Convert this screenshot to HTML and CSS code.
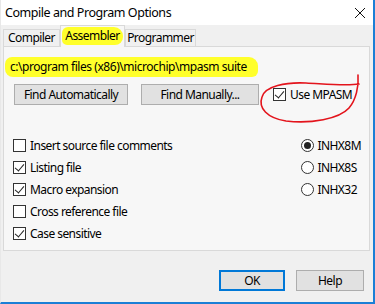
FILE: index.html
```
<!DOCTYPE html>
<html lang="en">
<head>
  <meta charset="UTF-8" />
  <title>Compile and Program Options</title>
  <link rel="stylesheet" href="styles.css">
</head>
<body>
  <div class="window">
    <div class="titlebar">
      <span class="title">Compile and Program Options</span>
      <svg class="close" width="12" height="12" viewBox="0 0 12 12"><path d="M1 1 L11 11 M11 1 L1 11" stroke="#111" stroke-width="1" fill="none"/></svg>
    </div>

    <div class="tabs">
      <div class="tab tab-compiler">Compiler</div>
      <div class="tab tab-assembler active"><span class="hl hl-tab">Assembler</span></div>
      <div class="tab tab-programmer">Programmer</div>
    </div>

    <div class="panel">
      <div class="path"><span class="hl hl-path">c:\program files (x86)\microchip\mpasm suite</span></div>

      <div class="find-row">
        <div class="btn btn-auto">Find Automatically</div>
        <div class="btn btn-manual">Find Manually...</div>
        <div class="check use-mpasm"><span class="box on"></span>Use MPASM</div>
      </div>

      <div class="options">
        <div class="checks">
          <div class="check"><span class="box"></span>Insert source file comments</div>
          <div class="check"><span class="box on"></span>Listing file</div>
          <div class="check"><span class="box on"></span>Macro expansion</div>
          <div class="check"><span class="box"></span>Cross reference file</div>
          <div class="check"><span class="box on"></span>Case sensitive</div>
        </div>
        <div class="radios">
          <div class="radio"><span class="dot on"></span>INHX8M</div>
          <div class="radio"><span class="dot"></span>INHX8S</div>
          <div class="radio"><span class="dot"></span>INHX32</div>
        </div>
      </div>
    </div>

    <div class="footer">
      <div class="btn btn-ok">OK</div>
      <div class="btn btn-help">Help</div>
    </div>

    <!-- red pen circle drawn over the Use MPASM box -->
    <svg class="scribble" width="375" height="304" viewBox="0 0 375 304">
      <path d="M357 75 C358 86 355 100 348 108 C338 119 310 124 285 121 C266 118 257 108 261 97 C264 86 285 82 305 83 C325 84 345 86 358 84" stroke="#e3141c" stroke-width="1.6" fill="none" stroke-linecap="round"/>
    </svg>
  </div>
</body>
</html>
```

FILE: styles.css
```
body {
  margin: 0;
  font-family: 'Noto Sans', 'Liberation Sans', sans-serif;
  font-size: 12px;
  letter-spacing: -0.55px;
  color: #000;
  background: #fff;
}

.window {
  position: relative;
  width: 375px;
  height: 304px;
  box-sizing: border-box;
  background: #f0f0f0;
  border-left: 1px solid #e8e8e8;
  border-right: 2px solid #1b7fd6;
  border-bottom: 2px solid #1b7fd6;
  overflow: hidden;
}

.titlebar {
  height: 25px;
  background: #fff;
  display: flex;
  align-items: center;
  justify-content: space-between;
  padding: 0 7px 0 4px;
}

.title {
  font-size: 12.5px;
  letter-spacing: -0.45px;
}

.close {
  margin-top: 1px;
}

.tabs {
  height: 21px;
  display: flex;
  align-items: flex-end;
  padding-left: 2px;
}

.tab {
  height: 17px;
  box-sizing: border-box;
  border: 1px solid #d9d9d9;
  border-bottom: none;
  background: #f0f0f0;
  line-height: 16px;
  text-align: center;
}

.tab-compiler {
  width: 57px;
}

.tab-assembler {
  width: 65px;
}

.tab-programmer {
  width: 71px;
}

.tab.active {
  height: 22px;
  margin-bottom: -1px;
  padding-top: 1px;
  background: #f7f7f7;
  position: relative;
  z-index: 1;
}

.hl {
  background: #ffff2b;
}

.hl-tab {
  display: inline-block;
  padding: 0 3px;
  line-height: 18px;
  border-radius: 6px 9px 8px 5px;
}

.panel {
  margin: 0 3px 0 2px;
  height: 205px;
  box-sizing: border-box;
  border: 1px solid #d9d9d9;
  background: #f7f7f7;
  padding: 10px 0 0 1px;
}

.path {
  height: 20px;
}

.hl-path {
  display: inline-block;
  width: 253px;
  height: 20px;
  box-sizing: border-box;
  padding-left: 5px;
  line-height: 20px;
  border-radius: 7px 9px 6px 8px;
  letter-spacing: -0.45px;
}

.find-row {
  display: flex;
  align-items: center;
  margin-top: 6px;
  padding-left: 9px;
}

.btn {
  height: 21px;
  box-sizing: border-box;
  border: 1px solid #adadad;
  background: #e1e1e1;
  display: flex;
  align-items: center;
  justify-content: center;
}

.btn-auto {
  width: 114px;
}

.btn-manual {
  width: 118px;
  margin-left: 13px;
}

.use-mpasm {
  margin-left: 14px;
}

.check,
.radio {
  display: flex;
  align-items: center;
  height: 22px;
}

.box {
  width: 13px;
  height: 13px;
  box-sizing: border-box;
  border: 1px solid #333;
  background: #fff;
  margin-right: 4px;
  position: relative;
}

.box.on::after {
  content: '';
  position: absolute;
  left: 3px;
  top: 0px;
  width: 4px;
  height: 8px;
  border-right: 1.3px solid #222;
  border-bottom: 1.3px solid #222;
  transform: rotate(40deg);
}

.options {
  display: flex;
  justify-content: space-between;
  margin-top: 29px;
  padding: 0 8px 0 8px;
}

.dot {
  width: 13px;
  height: 13px;
  box-sizing: border-box;
  border: 1px solid #333;
  border-radius: 50%;
  background: #fff;
  margin-right: 3px;
  display: flex;
  align-items: center;
  justify-content: center;
}

.dot.on::after {
  content: '';
  width: 7px;
  height: 7px;
  border-radius: 50%;
  background: #222;
}

.footer {
  display: flex;
  justify-content: flex-end;
  padding: 19px 9px 0 0;
}

.btn-ok {
  width: 66px;
  border: 2px solid #0078d7;
}

.btn-help {
  width: 68px;
  margin-left: 11px;
}

.scribble {
  position: absolute;
  left: 0;
  top: 0;
  pointer-events: none;
}
```
